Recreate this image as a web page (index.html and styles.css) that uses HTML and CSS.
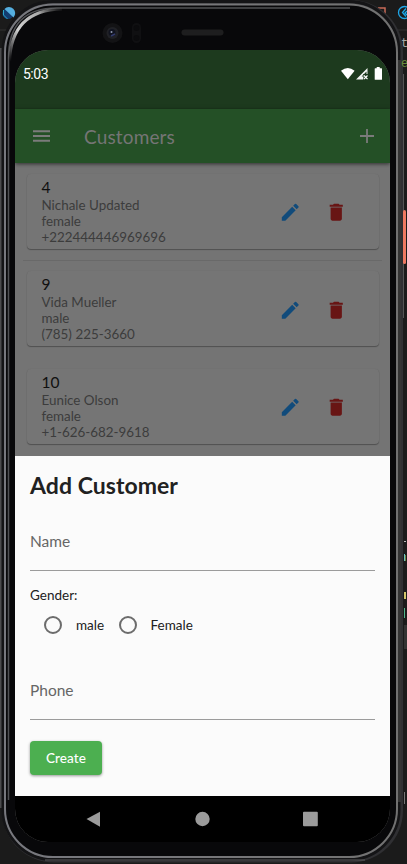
FILE: index.html
```html
<!DOCTYPE html>
<html lang="en">
<head>
<meta charset="utf-8">
<title>Customers</title>
<link rel="stylesheet" href="styles.css">
</head>
<body>
<svg class="device" viewBox="0 0 407 864" aria-hidden="true">
  <defs>
    <linearGradient id="shine" gradientUnits="userSpaceOnUse" x1="9" y1="60" x2="66" y2="9"><stop offset="0" stop-color="#d2d2d2" stop-opacity="0"/><stop offset=".35" stop-color="#d2d2d2"/><stop offset=".7" stop-color="#aaa"/><stop offset="1" stop-color="#555" stop-opacity="0"/></linearGradient>
    <linearGradient id="rim" x1="0" y1="0" x2="1" y2="0"><stop offset="0" stop-color="#77787e"/><stop offset=".5" stop-color="#77777a"/><stop offset="1" stop-color="#717171"/></linearGradient>
  </defs>
  <rect width="407" height="864" fill="#1b1b1b"/>
  <path d="M0 30h407" stroke="#333"/>
  <path d="M0 48h2v760h-2z" fill="#4b4b4d"/>
  <circle cx="8" cy="13.500" r="5.500" fill="#123d70"/><path d="M4.500 9a5.800 5.800 0 0 1 9 8.500z" fill="#55afe0"/><path d="M3.500 10v5l4 4" stroke="#2ca6c9" fill="none"/>
  <path d="M378 8h7v8h-7" fill="none" stroke="#c96b58" stroke-width="1.500"/>
  <circle cx="404.500" cy="12.500" r="6" fill="none" stroke="#1ea7e8" stroke-width="1.300"/><path d="M406 8.500l-3.500 4 3.500 4M407 11l-2 2 2 2" fill="none" stroke="#1ea7e8" stroke-width="1.300"/>
  <path d="M403.500 74v244" stroke="#555"/>
  <path d="M404 625h3v24h-3z" fill="#333"/>
  <path d="M404 541.500h2" stroke="#bbb"/><path d="M404 554h1v7h-1z" fill="#68c2c2"/><path d="M405 555h1v6h-1z" fill="#6c803e"/>
  <path d="M404 592h2v7h-2z" fill="#d3c56b"/><path d="M404 608h1v10h-1z" fill="#50b58a"/>
  <path d="M404.500 792v12" stroke="#777"/>
  <rect x="2" y="0" width="401" height="862.500" rx="52" fill="#303033"/>
  <rect x="3" y="1.500" width="396" height="858" rx="50" fill="none" stroke="#141416" stroke-width="3"/>
  <rect x="5" y="4.500" width="392" height="852.500" rx="48" fill="#08080a" stroke="url(#rim)" stroke-width="2"/>
  <path d="M8.500 800V58Q8.500 8 57 8H350" fill="none" stroke="#505154" stroke-width="1.500"/>
  <path d="M9.500 62Q11 10 62 9" fill="none" stroke="url(#shine)" stroke-width="3"/>
  <path d="M399.500 60V802" stroke="#343434" stroke-width="3"/>
  <path d="M45 860H365" stroke="#5c5c5e"/>
  <rect x="403" y="210" width="3" height="54" rx="1.500" fill="#ef7962"/>
  <circle cx="112.500" cy="33" r="10" fill="#131315"/><circle cx="112.500" cy="33" r="6" fill="#202126"/><circle cx="112" cy="32.500" r="3.500" fill="#10131f"/><circle cx="111.500" cy="32" r="1" fill="#8f98ae"/><path d="M111 36l4-2" stroke="#323a6b" stroke-width="1.500"/>
  <rect x="132" y="23" width="9" height="20" rx="4.500" fill="#101012"/><circle cx="136.500" cy="28" r="3" fill="#0b0b0d"/><circle cx="136.500" cy="38" r="3" fill="#0b0b0d"/>
  <rect x="181.500" y="29.500" width="42" height="6" rx="3" fill="#1e1e1f"/>
</svg>
<div class="editor-edge"><span class="code-t">t</span><span class="code-e">e</span></div>

<svg class="symbols" aria-hidden="true">
  <symbol id="edit" viewBox="0 0 24 24"><path d="M3 17.250V21h3.750L17.810 9.940l-3.750-3.750L3 17.250zM20.710 7.040a1 1 0 0 0 0-1.410l-2.340-2.340a1 1 0 0 0-1.410 0l-1.830 1.830 3.750 3.750 1.830-1.830z"/></symbol>
  <symbol id="delete" viewBox="0 0 24 24"><path d="M6 19c0 1.100.9 2 2 2h8c1.100 0 2-.9 2-2V7H6v12zM19 4h-3.500l-1-1h-5l-1 1H5v2h14V4z"/></symbol>
</svg>

<main class="screen">
  <header class="status">
    <span class="time">5:03</span>
    <svg class="status-icons" viewBox="0 0 42 14"><path d="M0 3.700Q6.800-1.700 13.600 3.700L6.800 12.200z"/><path d="M15 12.500L26.500 1v6h-4.200v5.500z" opacity=".95"/><path d="M23 8.500l3.500 3.700m0-3.700L23 12.200" stroke="#fff" stroke-width="1.200"/><path d="M20.500 9.500L25.500 4.500V7h-3.500v2.500z" fill="#1d3a1e"/><path d="M35.700 0h3v1.300h1.800q.5 0 .5.500v10.400q0 .6-.6.600H34.300q-.6 0-.6-.6V1.800q0-.5.500-.5h1.500z"/></svg>
  </header>
  <nav class="appbar">
    <svg class="menu" viewBox="0 0 18 12"><path d="M0 0h18v2H0zM0 5h18v2H0zM0 10h18v2H0z"/></svg>
    <h1>Customers</h1>
    <svg class="plus" viewBox="0 0 14 14"><path d="M6.100 0h1.800v6.100H14v1.800H7.900V14H6.100V7.900H0V6.100h6.100z"/></svg>
  </nav>
  <section class="list">
    <article class="card">
      <div class="info"><h2>4</h2><p>Nichale Updated</p><p>female</p><p>+222444446969696</p></div>
      <svg class="icon edit"><use href="#edit"/></svg><svg class="icon delete"><use href="#delete"/></svg>
    </article>
    <hr>
    <article class="card">
      <div class="info"><h2>9</h2><p>Vida Mueller</p><p>male</p><p>(785) 225-3660</p></div>
      <svg class="icon edit"><use href="#edit"/></svg><svg class="icon delete"><use href="#delete"/></svg>
    </article>
    <hr class="faint">
    <article class="card">
      <div class="info"><h2>10</h2><p>Eunice Olson</p><p>female</p><p>+1-626-682-9618</p></div>
      <svg class="icon edit"><use href="#edit"/></svg><svg class="icon delete"><use href="#delete"/></svg>
    </article>
  </section>
  <form class="sheet">
    <h2>Add Customer</h2>
    <div class="field">Name</div>
    <div class="gender">Gender:</div>
    <div class="radios"><i></i><span class="male">male</span><i></i><span>Female</span></div>
    <div class="field second">Phone</div>
    <button type="button">Create</button>
  </form>
  <footer class="system">
    <svg viewBox="0 0 375 46"><path d="M71.500 23L85 15.700v15z"/><circle cx="187.500" cy="23" r="7.200"/><rect x="288" y="15.800" width="14.800" height="14.500" rx="1"/></svg>
  </footer>
</main>
</body>
</html>
```

FILE: styles.css
```css
* { box-sizing: border-box; margin: 0; padding: 0; }
body { width: 407px; height: 864px; overflow: hidden; background: #1b1b1b; font-family: Lato, sans-serif; }
svg { display: block; }
.device { position: absolute; inset: 0; width: 407px; height: 864px; z-index: -1; }
.symbols { position: absolute; width: 0; height: 0; }
.editor-edge { position: absolute; left: 401px; top: 34px; width: 6px; height: 50px; overflow: hidden; display: flex; flex-direction: column; font: 12px/20px "Liberation Mono", monospace; color: #aaa; z-index: -1; }
.code-e { color: #688b3d; }
.screen { width: 375px; height: 792px; margin: 50px 0 0 15px; border-radius: 33px; overflow: hidden; display: flex; flex-direction: column; background: #747474; }
.status { flex: none; height: 59px; background: #1d3a1e; display: flex; justify-content: space-between; padding: 16px 7px 0 8px; }
.time { font: 14px/17px Roboto, sans-serif; color: #fff; letter-spacing: -.5px; }
.status-icons { width: 42px; height: 14px; margin-top: 1px; fill: #fff; }
.appbar { flex: none; height: 54px; background: #245026; display: flex; align-items: center; padding: 0 16px 0 18px; position: relative; box-shadow: 0 1px 4px rgba(0,0,0,.6); }
.appbar svg { fill: #7b7b7b; }
.menu { width: 17px; height: 12px; }
.appbar h1 { margin-left: 34px; flex: 1; font-size: 19px; line-height: 24px; font-weight: 400; color: #757575; letter-spacing: .15px; padding-top: 1px; }
.plus { width: 14px; height: 14px; }
.list { flex: none; height: 293px; padding: 11px 8px 0; }
.card { height: 75px; margin: 0 3.500px; border-radius: 4px; background: #757575; box-shadow: 0 1px 1px rgba(0,0,0,.3), 0 0 1px rgba(0,0,0,.12); display: flex; align-items: center; padding: 0 31px 0 15px; }
.info { flex: 1; align-self: flex-start; padding-top: 4px; }
.info h2 { font-size: 15.500px; line-height: 19px; font-weight: 400; color: #101010; }
.info p { font-size: 13.400px; line-height: 16px; color: #3c3c3c; }
.icon { width: 22.500px; height: 22.500px; margin-top: 2px; }
.edit { fill: #114b7b; margin-right: 23.500px; }
.delete { fill: #681514; }
hr { border: 0; height: 1px; background: #696969; margin: 11px 0 10.250px; }
hr.faint { background: #747474; }
.sheet { flex: none; height: 340px; background: #fbfbfb; color: #212121; padding: 14px 15px 0; }
.sheet h2 { font-size: 23px; line-height: 30px; font-weight: 700; letter-spacing: .05px; }
.field { height: 48px; margin-top: 23px; border-bottom: 1px solid #9b9b9b; padding-top: 7px; font-size: 15.500px; line-height: 22px; color: #666; }
.gender { font-size: 13.500px; line-height: 18px; margin-top: 15px; }
.radios { display: flex; align-items: center; height: 22px; margin-top: 10px; padding-left: 14px; font-size: 13.500px; }
.radios i { width: 18px; height: 18px; border: 2px solid #6c6c6c; border-radius: 50%; margin-right: 14px; }
.radios .male { width: 42.500px; }
.field.second { margin-top: 36px; }
button { display: block; width: 72px; height: 34px; margin-top: 21px; border: 0; border-radius: 4px; background: #4caf50; box-shadow: 0 1px 3px rgba(0,0,0,.4); color: #fff; font: 500 13.500px/34px Lato, sans-serif; letter-spacing: .1px; }
.system { flex: none; height: 46px; background: #000; }
.system svg { width: 375px; height: 46px; fill: #9b9b9b; }
```
